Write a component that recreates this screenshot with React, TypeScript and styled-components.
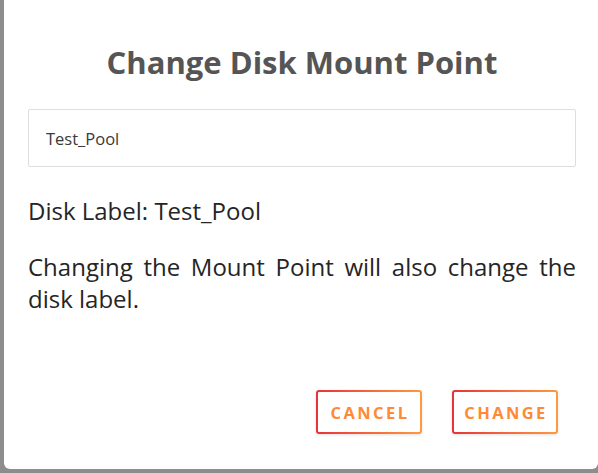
import styled, { createGlobalStyle } from "styled-components";

const GlobalStyle = createGlobalStyle`
  html, body {
    margin: 0;
    padding: 0;
    background: #8d8d8d;
    height: 100%;
    overflow: hidden;
  }
  #root {
    height: 100%;
  }
`;

const Backdrop = styled.div`
  display: flex;
  align-items: flex-start;
  height: 100%;
  padding-left: 4px;
  box-sizing: border-box;
`;

const Dialog = styled.div`
  width: 594px;
  height: 469px;
  box-sizing: border-box;
  background: #fff;
  border-radius: 0 0 6px 6px;
  padding: 0 22px 0 24px;
  display: flex;
  flex-direction: column;
  font-family: "Open Sans", "Noto Sans", sans-serif;
`;

const Title = styled.h2`
  margin: 40px 0 0;
  text-align: center;
  font-size: 31px;
  line-height: 44px;
  font-weight: 700;
  color: #555;
`;

const Field = styled.input`
  margin-top: 25px;
  height: 58px;
  box-sizing: border-box;
  border: 1px solid #dedede;
  border-radius: 2px;
  padding: 0 17px;
  font-family: inherit;
  font-size: 16.5px;
  color: #3a3a3a;
  outline: none;
`;

const Label = styled.p`
  margin: 28px 0 0;
  font-size: 24px;
  line-height: 32px;
  color: #252525;
`;

const Note = styled.p`
  margin: 24px 0 0;
  font-size: 24px;
  line-height: 32px;
  color: #252525;
  text-align: justify;
`;

const Actions = styled.div`
  margin-top: auto;
  margin-bottom: 35px;
  display: flex;
  justify-content: flex-end;
  gap: 30px;
  padding-right: 18px;
`;

const GradientButton = styled.button`
  width: 106px;
  height: 44px;
  padding: 0 0 0 2px;
  border: 2px solid transparent;
  border-radius: 3px;
  background:
    linear-gradient(#fff, #fff) padding-box,
    linear-gradient(90deg, #e8333a, #ff9a3e) border-box;
  box-shadow: 0 1px 3px rgba(0, 0, 0, 0.12);
  font-family: inherit;
  font-size: 16.5px;
  font-weight: 700;
  letter-spacing: 2.4px;
  color: #ff8a35;
  cursor: pointer;
`;

export default function App() {
  return (
    <>
      <GlobalStyle />
      <Backdrop>
        <Dialog>
          <Title>Change Disk Mount Point</Title>
          <Field defaultValue="Test_Pool" />
          <Label>Disk Label: Test_Pool</Label>
          <Note>Changing the Mount Point will also change the disk label.</Note>
          <Actions>
            <GradientButton>CANCEL</GradientButton>
            <GradientButton>CHANGE</GradientButton>
          </Actions>
        </Dialog>
      </Backdrop>
    </>
  );
}
